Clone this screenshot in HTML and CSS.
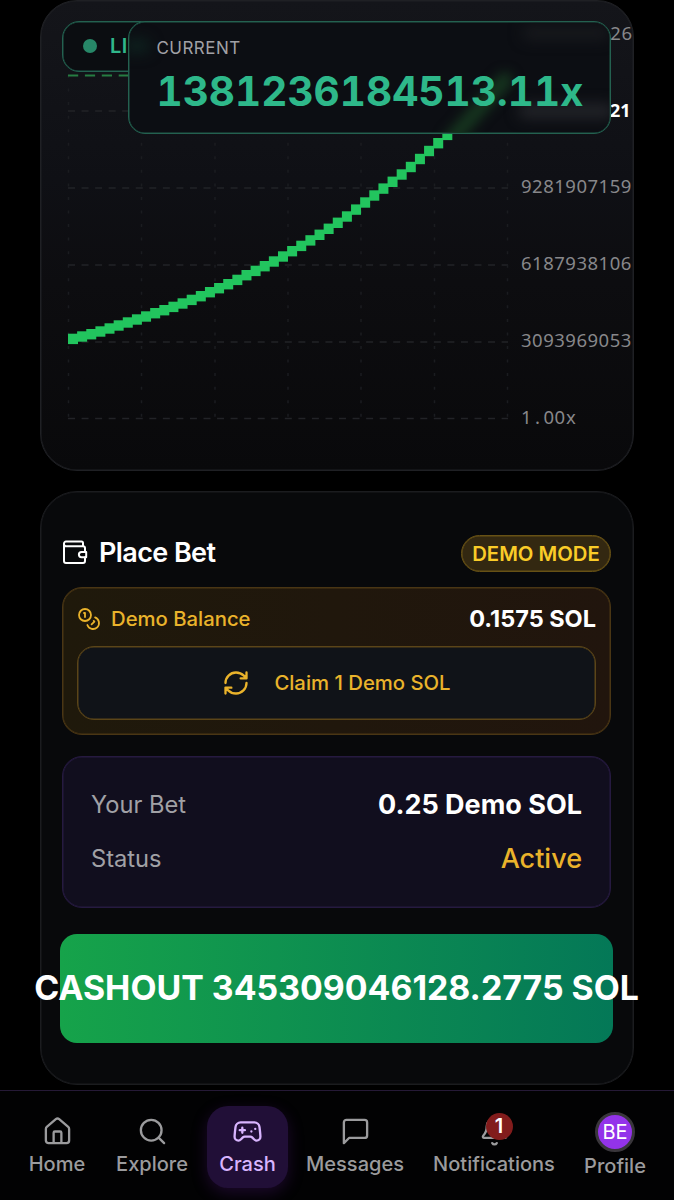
FILE: index.html
```
<!DOCTYPE html>
<html lang="en">
<head>
<meta charset="utf-8">
<title>Crash</title>
<link rel="stylesheet" href="styles.css">
</head>
<body>
<main class="page">
  <section class="card chart-card">
    <svg class="chart" viewBox="40 0 594 470" width="594" height="470">
      <g class="grid-h">
        <path d="M68 111H508M68 188H508M68 265H508M68 342H508M68 418.5H508"/>
      </g>
      <g class="grid-v">
        <path d="M68.5 75V418M141.5 75V418M215 75V418M288 75V418M361 75V418M434.5 75V418M507.5 75V418"/>
      </g>
      <path class="level" d="M68 75.5H508"/>
      <g id="curve" class="curve"></g>
      <g class="axis">
        <text x="610.300" y="39.500">26</text>
        <text class="axis-now" x="610" y="116.500" textLength="20.500" lengthAdjust="spacingAndGlyphs">21</text>
        <text x="521" y="192.500">9281907159</text>
        <text x="521" y="269.500">6187938106</text>
        <text x="521" y="347">3093969053</text>
        <text x="521 535 543.500 554.600 566" y="424">1.00x</text>
      </g>
    </svg>
    <div class="live"><span class="dot"></span>LI</div>
    <div class="current">
      <svg class="glow" viewBox="0 0 482 111">
        <path class="glow-curve" d="M322 118L376 58"/>
        <path class="glow-grey" d="M400 11H474"/>
        <path class="glow-grey glow-strong" d="M396 89H478"/>
        <path class="glow-live" d="M2 24H14"/>
      </svg>
      <span class="current-label">CURRENT</span>
      <strong class="current-value">1381236184513.11x</strong>
    </div>
  </section>

  <section class="card bet-card">
    <header class="bet-head">
      <svg class="wallet" viewBox="0 0 26 26"><path d="M21 6.500V4A1.500 1.500 0 0 0 19.500 2.500H4A2 2 0 0 0 2 4.500V22A2 2 0 0 0 4 24H21A2 2 0 0 0 23 22V18M2 5A2 2 0 0 0 4 7.200H21A2 2 0 0 1 23 9.200V13M24.200 13H19.500A2.600 2.600 0 0 0 19.500 18.200H24.200Z"/></svg>
      <h2 class="title">Place Bet</h2>
      <span class="mode">DEMO MODE</span>
    </header>
    <div class="demo">
      <div class="demo-row">
        <svg class="coins" viewBox="0 0 24 24"><circle cx="8" cy="8" r="6"/><path d="M18.090 10.370A6 6 0 1 1 10.340 18M7 6h1v4M16.710 13.880l.7.71-2.820 2.820"/></svg>
        <span class="demo-label">Demo Balance</span>
        <strong class="demo-value">0.1575 SOL</strong>
      </div>
      <button class="claim">
        <svg class="refresh" viewBox="0 0 24 24"><path d="M3 12a9 9 0 0 1 9-9 9.750 9.750 0 0 1 6.740 2.740L21 8M21 3v5h-5M21 12a9 9 0 0 1-9 9 9.750 9.750 0 0 1-6.740-2.740L3 16M8 16H3v5"/></svg>
        <span class="claim-text">Claim 1 Demo SOL</span>
      </button>
    </div>
    <div class="status">
      <div class="status-row"><span class="status-key">Your Bet</span><strong class="status-bet">0.25 Demo SOL</strong></div>
      <div class="status-row"><span class="status-key">Status</span><span class="status-active">Active</span></div>
    </div>
    <button class="cashout"><span class="cashout-text">CASHOUT 345309046128.2775 SOL</span></button>
  </section>

  <nav class="nav">
    <a class="item item-home"><svg class="icon" viewBox="0 0 24 24"><path d="M15 21v-8a1 1 0 0 0-1-1h-4a1 1 0 0 0-1 1v8M3 10a2 2 0 0 1 .709-1.528l7-5.999a2 2 0 0 1 2.582 0l7 5.999A2 2 0 0 1 21 10v9a2 2 0 0 1-2 2H5a2 2 0 0 1-2-2z"/></svg><span>Home</span></a>
    <a class="item item-explore"><svg class="icon" viewBox="0 0 24 24"><circle cx="11" cy="11" r="8"/><path d="m21 21-4.300-4.300"/></svg><span>Explore</span></a>
    <a class="item item-crash"><svg class="icon" viewBox="0 0 24 24"><path d="M6 11h4M8 9v4M15 12h.01M18 10h.01M17.320 5H6.680a4 4 0 0 0-3.978 3.590c-.006.052-.010.101-.017.152C2.604 9.416 2 14.456 2 16a3 3 0 0 0 3 3c1 0 1.500-.5 2-1l1.414-1.414A2 2 0 0 1 9.828 16h4.344a2 2 0 0 1 1.414.586L17 18c.5.5 1 1 2 1a3 3 0 0 0 3-3c0-1.545-.604-6.584-.685-7.258-.007-.050-.011-.1-.017-.151A4 4 0 0 0 17.320 5z"/></svg><span>Crash</span></a>
    <a class="item item-messages"><svg class="icon" viewBox="0 0 24 24"><path d="M21 15a2 2 0 0 1-2 2H7l-4 4V5a2 2 0 0 1 2-2h14a2 2 0 0 1 2 2z"/></svg><span>Messages</span></a>
    <a class="item item-notifications"><svg class="icon" viewBox="0 0 24 24"><path d="M10.268 21a2 2 0 0 0 3.464 0M3.262 15.326A1 1 0 0 0 4 17h16a1 1 0 0 0 .740-1.673C19.410 13.956 18 12.499 18 8A6 6 0 0 0 6 8c0 4.499-1.411 5.956-2.738 7.326"/></svg><b class="badge">1</b><span>Notifications</span></a>
    <a class="item item-profile"><span class="avatar">BE</span><span>Profile</span></a>
  </nav>
</main>
<script src="chart.js"></script>
</body>
</html>
```
FILE: styles.css
```
* { box-sizing: border-box; }
body { margin: 0; background: #000; font-family: Inter, "Liberation Sans", sans-serif; color: #fff; }
svg { display: block; flex: none; fill: none; stroke: currentColor; stroke-width: 2; stroke-linecap: round; stroke-linejoin: round; }
button { font: inherit; color: inherit; margin: 0; padding: 0; }
.page { width: 674px; height: 1200px; overflow: hidden; display: flex; flex-direction: column; }
.card { width: 593.500px; margin-left: 40px; border: 1px solid #1f2024; box-shadow: inset 0 0 0 .5px #1f2024; border-radius: 37px; flex: none; }

.chart-card { position: relative; height: 471px; background: linear-gradient(#14151a 0, #0f1015 38%, #0d0d10 60%, #09090b 100%); overflow: hidden; }
.chart { margin: -1px 0 0 -1px; stroke: none; stroke-linecap: butt; }
.grid-h { stroke: #222327; stroke-width: 1.5; stroke-dasharray: 7 6.550; }
.grid-v { stroke: #1b1c20; stroke-width: 1.500; stroke-dasharray: 3 10.550; }
.level { stroke: #267d42; stroke-width: 2; stroke-dasharray: 10.200 6.700; }
.curve { fill: #22c55e; }
.axis { fill: #87878a; font: 18.500px "Noto Sans", sans-serif; letter-spacing: .5px; }
.axis-now { fill: #fff; font-weight: 700; letter-spacing: 0; }
.live { position: absolute; left: 21px; top: 20px; width: 130px; height: 50.500px; display: flex; align-items: center; gap: 13px; padding-left: 20.500px; border: 1px solid #246150; box-shadow: inset 0 0 0 .5px #205a4a; border-radius: 17px; background: #0b0d11; color: #30b78b; font-size: 20px; font-weight: 600; letter-spacing: .5px; }
.dot { width: 14px; height: 14px; margin-left: -.5px; border-radius: 50%; background: #278768; }
.current { position: absolute; left: 87px; top: 20px; width: 483px; height: 112.500px; padding: 14px 27.500px; border: 1px solid #246150; box-shadow: inset 0 0 0 .5px #205a4a; border-radius: 17px; background: #0c0e13; display: flex; flex-direction: column; overflow: hidden; }
.glow { position: absolute; left: 0; top: 0; width: 482px; height: 111px; }
.glow-curve { stroke: #16361f; stroke-width: 15; filter: blur(6px); }
.glow-grey { stroke: #18191d; stroke-width: 14; filter: blur(7px); }
.glow-strong { stroke: #24252a; }
.glow-live { stroke: #0e221f; stroke-width: 14; filter: blur(7px); }
.current-label { position: relative; color: #a1a1a6; font-size: 17px; line-height: 24px; letter-spacing: .45px; }
.current-value { position: relative; color: #2eb88a; font-size: 40.500px; line-height: 63px; font-weight: 700; font-variant-numeric: tabular-nums; white-space: nowrap; }

.bet-card { margin-top: 20px; height: 593.500px; padding: 42px 21.500px 0 21px; background: #08090b; border-color: #1b1c1f; box-shadow: inset 0 0 0 .5px #1b1c1f; }
.bet-head { display: flex; align-items: center; height: 38px; }
.wallet { width: 26px; height: 26px; margin: -2px 11px 0 0; }
.title { margin: 0; font-size: 27px; font-weight: 600; letter-spacing: -.6px; line-height: 38px; }
.mode { margin-left: auto; width: 150px; height: 37px; border: 1px solid #675115; box-shadow: inset 0 0 0 .5px #675115; border-radius: 19px; background: #332811; color: #facc28; font-size: 20.300px; font-weight: 600; display: flex; align-items: center; justify-content: center; white-space: nowrap; }
.demo { margin-top: 15px; height: 148px; border: 1px solid #4a3614; box-shadow: inset 0 0 0 .5px #4a3614; border-radius: 20px; padding: 12.500px 14px; background: linear-gradient(90deg, #1f190b, #21150d); }
.demo-row { display: flex; align-items: center; height: 36px; color: #eab32b; }
.coins { width: 24px; height: 24px; margin: 0 10.500px 0 -.5px; stroke-width: 1.8; }
.demo-label { font-size: 20.300px; font-weight: 500; }
.demo-value { margin-left: auto; color: #fff; font-size: 23.500px; font-weight: 700; }
.claim { width: 100%; height: 74px; margin-top: 9px; display: flex; align-items: center; justify-content: center; gap: 24px; border: 1px solid #5b4518; box-shadow: inset 0 0 0 .5px #5b4518; border-radius: 17px; background: #101318; color: #eab32b; }
.refresh { width: 28px; height: 28px; }
.claim-text { font-size: 20.300px; font-weight: 500; }
.status { margin-top: 20.500px; height: 152px; padding: 20.500px 28px; border: 1px solid #261a40; box-shadow: inset 0 0 0 .5px #261a40; border-radius: 20px; background: #110e1e; }
.status-row { display: flex; justify-content: space-between; align-items: center; height: 54px; }
.status-key { color: #a1a1a6; font-size: 23.700px; }
.status-bet { font-size: 27px; font-weight: 700; }
.status-active { font-size: 27px; font-weight: 500; color: #eab32b; }
.cashout { display: flex; align-items: center; justify-content: center; width: 553px; height: 108.500px; margin: 26.500px 0 0 -2px; border: 0; border-radius: 17px; background: linear-gradient(90deg, #16a34a, #047857); color: #fff; }
.cashout-text { flex: none; font-size: 33.850px; font-weight: 700; white-space: nowrap; position: relative; top: -.5px; }

.nav { flex: none; margin-top: 5.500px; height: 110px; padding: 15px 0 0 17px; display: flex; gap: 7px; border-top: 1px solid #251936; background: #020203; color: #9b9b9d; font-size: 20.050px; font-weight: 500; }
.item { position: relative; flex: none; display: flex; flex-direction: column; align-items: center; height: 82px; padding-top: 10px; border-radius: 21px; line-height: 28px; white-space: nowrap; }
.item-home { width: 80px; }
.item-explore { width: 96px; }
.item-crash { width: 81px; background: #210f37; color: #d8b4fe; box-shadow: 0 5px 16px rgba(88,28,135,.3); }
.item-messages { width: 120px; }
.item-notifications { width: 144px; }
.item-profile { width: 84px; padding-top: 6px; }
.icon { width: 31px; height: 31px; margin-bottom: 3px; stroke-width: 1.8; }
.badge { position: absolute; left: 63.500px; top: 7px; width: 27px; height: 27px; border-radius: 50%; background: #821c1c; color: #fff; font-size: 20px; font-weight: 600; line-height: 27px; text-align: center; }
.avatar { width: 40px; height: 40px; border: 3px solid #39363b; border-radius: 50%; background: #9333ea; color: #fff; font-size: 20px; font-weight: 400; line-height: 34px; text-align: center; }
```
FILE: chart.js
```
// Top edge of each block of the multiplier curve, left to right.
const tops = [333.7, 331.3, 329, 326.3, 323.3, 320.3, 317.3, 314.3, 311.3, 308, 305, 301.7, 298.3, 294.7, 291, 287, 283, 279, 274.7, 270, 265.7, 261, 256.3, 251.3, 246, 240.7, 235.2, 229.6, 223.6, 217.6, 211.3, 204.4, 197.3, 190.3, 183.4, 176.6, 169.3, 161.8, 153.8, 145.8, 138, 129.7, 121.3, 112.8, 104, 95, 86, 78];
const curve = document.getElementById('curve');
tops.forEach((y, i) => {
  const r = document.createElementNS('http://www.w3.org/2000/svg', 'rect');
  r.setAttribute('x', 68 + i * 9.13);
  r.setAttribute('y', y);
  r.setAttribute('width', 10);
  r.setAttribute('height', 10.4);
  curve.appendChild(r);
});
```
